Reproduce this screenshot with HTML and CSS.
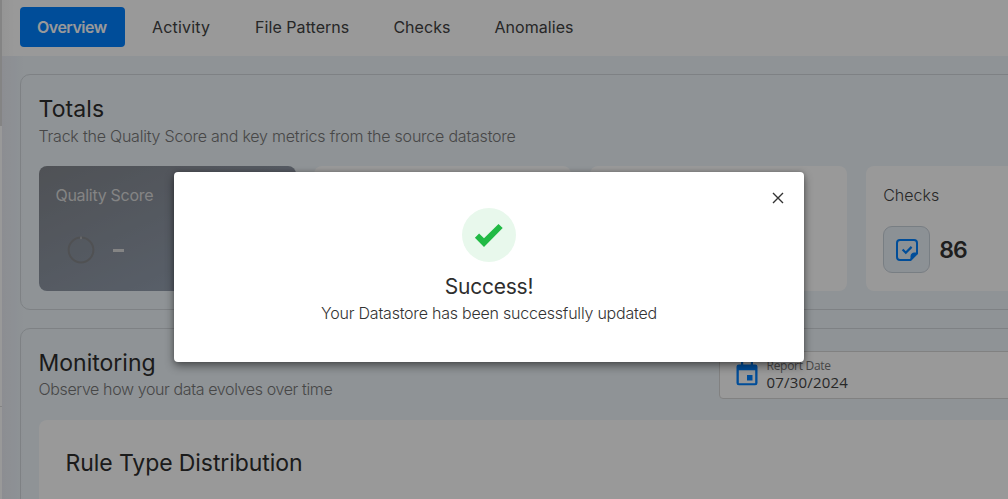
FILE: index.html
```html
<!DOCTYPE html>
<html lang="en">
<head>
<meta charset="utf-8">
<title>Datastore overview</title>
<link rel="stylesheet" href="styles.css">
</head>
<body>
<div class="app">
  <aside class="rail"><div class="rail-thumb"></div><div class="rail-rest"></div></aside>
  <main class="page">
    <nav class="tabs">
      <a class="tab tab-active"><span class="t-overview">Overview</span></a>
      <a class="tab"><span class="t-activity">Activity</span></a>
      <a class="tab"><span class="t-patterns">File Patterns</span></a>
      <a class="tab"><span class="t-checks">Checks</span></a>
      <a class="tab"><span class="t-anomalies">Anomalies</span></a>
    </nav>
    <div class="content">
      <section class="panel totals">
        <h2 class="title t-totals">Totals</h2>
        <p class="subtitle t-track">Track the Quality Score and key metrics from the source datastore</p>
        <div class="cards">
          <article class="card score">
            <h3 class="label t-quality">Quality Score</h3>
            <div class="metric">
              <svg class="ring" width="28" height="28" viewBox="0 0 28 28"><circle cx="14" cy="14" r="12.4" fill="none" stroke="#85878b" stroke-width="2"/><path d="M14 .6v2.5" stroke="#ddd" stroke-width=".8"/></svg>
              <span class="dash"></span>
            </div>
          </article>
          <article class="card"></article>
          <article class="card"></article>
          <article class="card">
            <h3 class="label t-cardchecks">Checks</h3>
            <div class="metric">
              <span class="tile">
                <svg width="24" height="24" viewBox="0 0 24 24"><path d="M5 2h14a3 3 0 0 1 3 3v10.500L15.500 22H5a3 3 0 0 1-3-3V5a3 3 0 0 1 3-3Z" fill="none" stroke="#0080ff" stroke-width="2"/><path d="M23 14.500 15.500 23v-4a4 4 0 0 1 4-4.500Z" fill="#0080ff"/><path d="m7.600 11.500 3.200 3.200 5.800-5.800" fill="none" stroke="#0080ff" stroke-width="2.200"/></svg>
              </span>
              <strong class="value">86</strong>
            </div>
          </article>
        </div>
      </section>
      <section class="panel monitoring">
        <header class="panel-head">
          <div>
            <h2 class="title t-monitoring">Monitoring</h2>
            <p class="subtitle t-observe">Observe how your data evolves over time</p>
          </div>
          <div class="date-field">
            <svg width="22" height="24" viewBox="0 0 22 24"><path d="M5 0h2.200v2.500h7.600V0H17v2.500h2A2.300 2.300 0 0 1 21.500 4.800V21a2.300 2.300 0 0 1-2.300 2.300H2.800A2.300 2.300 0 0 1 .5 21V4.800a2.300 2.300 0 0 1 2.300-2.300H5ZM2.800 8.300V21.200H19.200V8.300Z" fill="#0080ff" fill-rule="evenodd"/><path d="M11 13h5.500v5.500H11z" fill="#0080ff"/></svg>
            <div class="date-text"><span class="date-label">Report Date</span><span class="date-value">07/30/2024</span></div>
          </div>
        </header>
        <div class="chart"><h3 class="title t-rule">Rule Type Distribution</h3></div>
      </section>
    </div>
  </main>
</div>
<div class="overlay">
  <div class="dialog" role="dialog">
    <svg class="close" width="12" height="12" viewBox="0 0 12 12"><path d="m1 1 10 10M11 1 1 11" stroke="#333" stroke-width="1.400"/></svg>
    <div class="badge"><svg width="30" height="24" viewBox="0 0 30 24"><path d="M.9 14.700 5.100 10.500l4.900 4.700L24.500.9l4.200 4.200L10 23.900Z" fill="#21ba45"/></svg></div>
    <h1 class="dialog-title">Success!</h1>
    <p class="dialog-text">Your Datastore has been successfully updated</p>
  </div>
</div>
</body>
</html>
```
FILE: styles.css
```css
* { box-sizing: border-box; }
html, body { margin: 0; height: 100%; overflow: hidden; }
body { font-family: Inter, "Liberation Sans", sans-serif; font-size: 16px; color: #2e2e2e; background: #eef5fa; }
h1, h2, h3, p { margin: 0; font-weight: 400; }
svg { display: block; flex: none; }
.app { display: flex; height: 499px; overflow: hidden; }
.rail { width: 2px; flex: none; background: #fff; }
.rail-thumb { height: 126px; background: #ddd; }
.rail-rest { height: 281px; border-bottom: 1px solid #ddd; }
.page { flex: 1; min-width: 0; background: linear-gradient(90deg, #eaecf3 0, #ebf0f7 10px, #eef5fa 22px); }
.tabs { display: flex; height: 56px; padding: 7px 0 9px 18px; background: linear-gradient(90deg, #f8f8f8, #fff 12px); }
.tab { display: flex; align-items: center; height: 40px; padding: 0 17px 1px; margin-right: 10px; color: #424242; letter-spacing: .05px; white-space: nowrap; }
.tab-active { width: 105px; background: #0080ff; color: #fff; border-radius: 4px; font-weight: 600; letter-spacing: -.5px; }
.t-activity { letter-spacing: .17px; margin-right: 1px; }
.content { display: flex; flex-direction: column; gap: 18px; padding: 18px 0 0 18px; }
.panel { width: 1120px; padding: 18px 17.500px; border: 1px solid #d2d8dd; border-radius: 10px; }
.totals { height: 236px; }
.monitoring { height: 200px; }
.title { font-size: 23px; line-height: 32px; white-space: nowrap; }
.subtitle { line-height: 22px; font-weight: 300; color: #777; white-space: nowrap; }
.t-track { letter-spacing: -.22px; }
.t-observe { letter-spacing: -.38px; margin-top: -1px; }
.t-totals { letter-spacing: .1px; }
.t-rule { letter-spacing: -.08px; }
.cards { display: grid; grid-template-columns: repeat(4, 257px); gap: 18.900px; margin-top: 19px; }
.card { height: 125px; padding: 17px; border-radius: 8px; background: #fff; }
.score { background: linear-gradient(155deg, #84888f, #99a6b9); color: #fff; }
.label { font-size: 16px; line-height: 26px; margin-top: -1px; font-weight: 300; white-space: nowrap; color: #444; }
.score .label { color: #ddd; font-weight: 400; letter-spacing: -.3px; }
.metric { display: flex; align-items: center; height: 47px; margin-top: 18px; }
.ring { margin-left: 11px; }
.dash { width: 11px; height: 2.500px; margin: 2px 0 0 18px; background: #ddd; }
.tile { display: grid; place-items: center; width: 47px; height: 47px; border: 1px solid #c9d2db; border-radius: 9px; background: #eaf2f9; }
.value { margin-left: 9px; font-size: 23px; font-weight: 600; color: #333; letter-spacing: -.8px; }
.panel-head { display: flex; height: 73px; }
.date-field { display: flex; gap: 9px; width: 403px; height: 48px; margin: 3.500px 0 0 auto; padding: 7px 16px; border: 1px solid #d8d8d8; border-radius: 4px; background: #fff; font-family: "Open Sans", sans-serif; }
.date-field svg { margin-top: 3px; }
.date-text { display: flex; flex-direction: column; }
.date-label { font-size: 12px; line-height: 13px; color: #777; letter-spacing: -.28px; }
.date-value { font-size: 15px; line-height: 21px; color: #444; letter-spacing: .2px; }
.chart { height: 160px; padding: 27px; border-radius: 8px; background: #fff; }
.overlay { position: absolute; inset: 0; background: rgba(0, 0, 0, .4); }
.dialog { position: absolute; left: 174px; top: 172px; display: flex; flex-direction: column; align-items: center; width: 630px; height: 190px; padding-top: 36px; border-radius: 4px; background: #fff; box-shadow: 0 4px 10px rgba(0, 0, 0, .45), 0 0 4px rgba(0, 0, 0, .2); }
.close { position: absolute; right: 20px; top: 20px; }
.badge { display: grid; place-items: center; width: 54px; height: 54px; border-radius: 50%; background: #e8f8ec; }
.dialog-title { margin-top: 10px; font-size: 21px; line-height: 30px; letter-spacing: -.25px; }
.dialog-text { line-height: 23px; font-weight: 300; color: #333; letter-spacing: -.22px; white-space: nowrap; }
```
